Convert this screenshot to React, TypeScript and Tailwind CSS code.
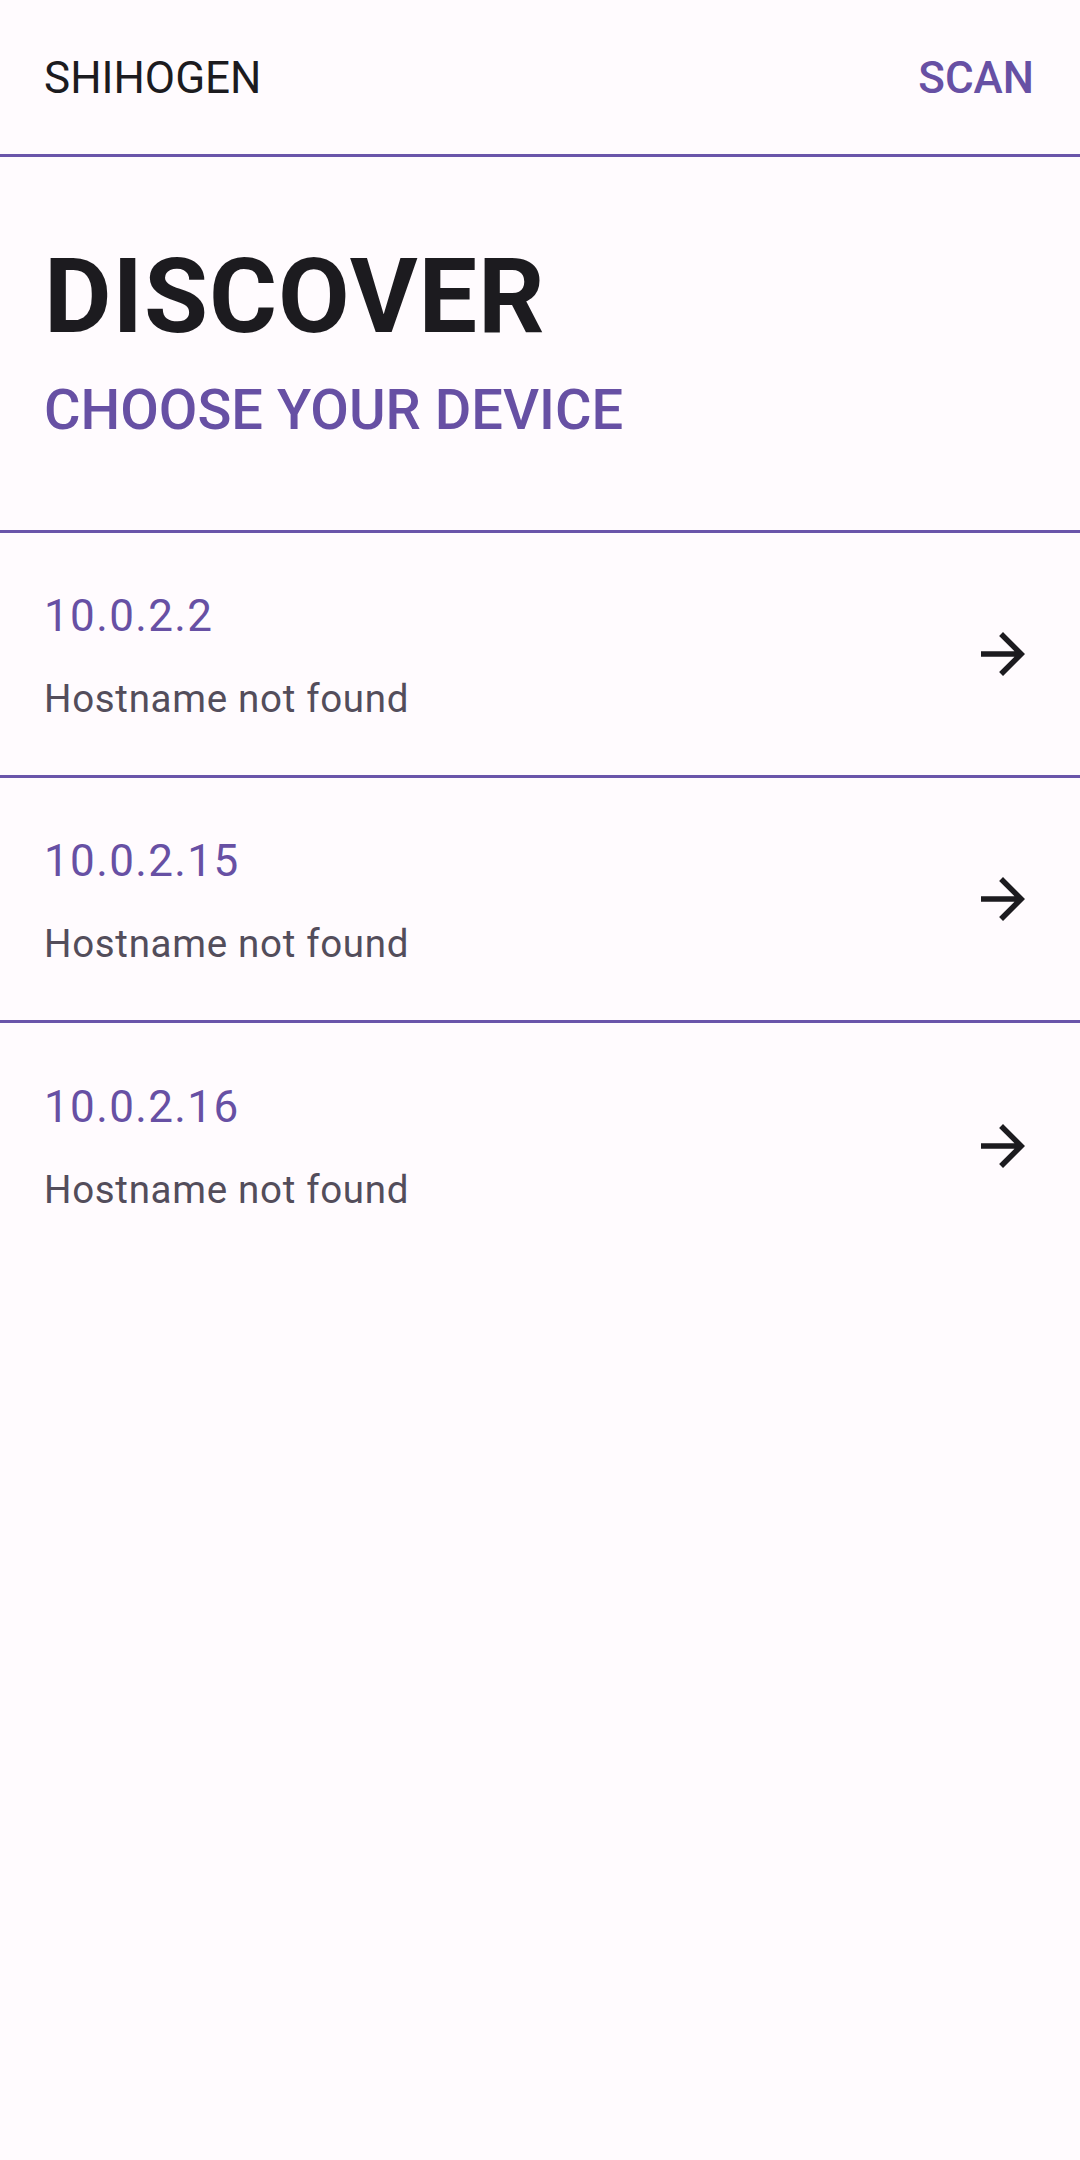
const devices = [
  { ip: "10.0.2.2", host: "Hostname not found" },
  { ip: "10.0.2.15", host: "Hostname not found" },
  { ip: "10.0.2.16", host: "Hostname not found" },
];

const ArrowForward = () => (
  <svg viewBox="0 0 24 24" className="w-[66px] h-[66px] fill-[#1C1B1F]">
    <path d="M12 4l-1.41 1.41L16.17 11H4v2h12.17l-5.58 5.59L12 20l8-8z" />
  </svg>
);

const DeviceRow = ({ ip, host, last }: { ip: string; host: string; last: boolean }) => (
  <div
    className={`flex items-center justify-between h-[245px] px-[44px] ${
      last ? "" : "border-b-[3px] border-[#6A55AA]"
    }`}
  >
    <div className="flex flex-col">
      <span className="text-[44px] leading-[66px] tracking-[1.375px] text-[#6750A4]">{ip}</span>
      <span className="mt-[22px] text-[38.5px] leading-[55px] tracking-[0.69px] text-[#534D5B]">
        {host}
      </span>
    </div>
    <ArrowForward />
  </div>
);

export default function App() {
  return (
    <div className="min-h-[2160px] w-[1080px] bg-[#FFFBFE] font-['Roboto','Liberation_Sans',sans-serif]">
      <header className="flex items-center justify-between h-[157px] pt-[2px] px-[44px] border-b-[3px] border-[#6A55AA]">
        <span className="text-[44px] text-[#1C1B1F]">SHIHOGEN</span>
        <span className="text-[44px] font-medium text-[#6750A4] pr-[2px]">SCAN</span>
      </header>

      <section className="pt-[88px] pb-[92px] px-[44px] border-b-[3px] border-[#6A55AA]">
        <h1 className="text-[104px] leading-[104px] tracking-[1px] font-bold text-[#1C1B1F]">DISCOVER</h1>
        <h2 className="mt-[33px] text-[56px] leading-[56px] font-medium text-[#6750A4]">CHOOSE YOUR DEVICE</h2>
      </section>

      <div>
        {devices.map((d, i) => (
          <DeviceRow key={d.ip} ip={d.ip} host={d.host} last={i === devices.length - 1} />
        ))}
      </div>
    </div>
  );
}
